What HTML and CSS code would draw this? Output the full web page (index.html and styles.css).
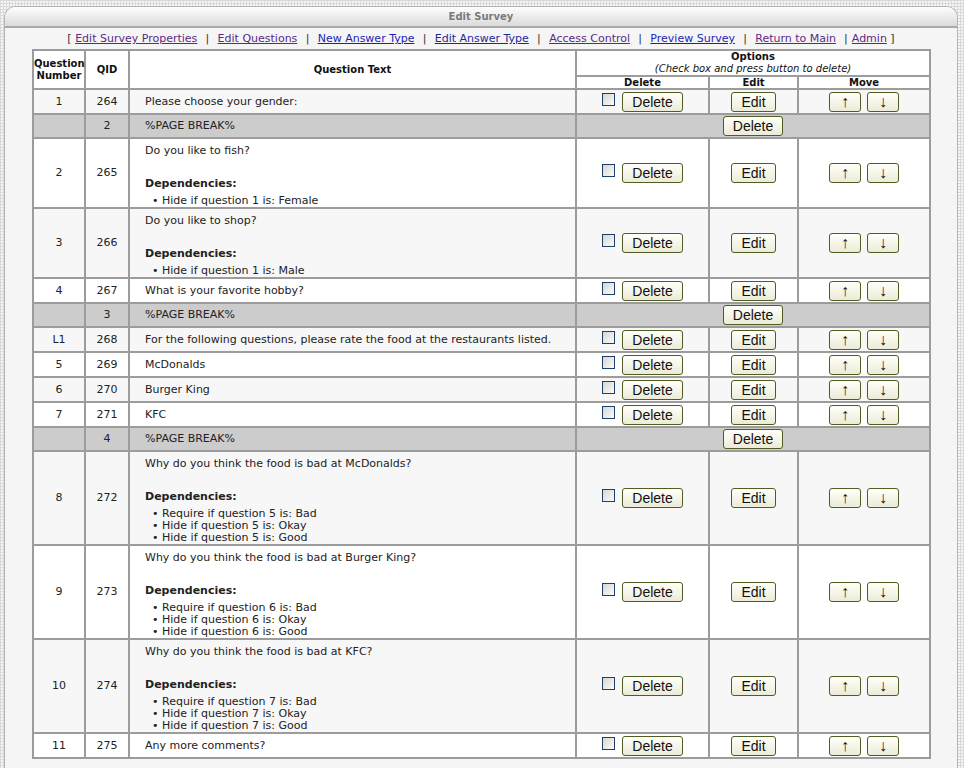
FILE: index.html
```html
<!DOCTYPE html>
<html>
<head>
<meta charset="utf-8">
<title>Edit Survey</title>
<link rel="stylesheet" href="styles.css">
</head>
<body>
<div class="panel">
  <div class="panel-head">Edit Survey</div>
  <div class="links">[ <a class="v" href="#">Edit Survey Properties</a><span class="sep">|</span><a class="v" href="#">Edit Questions</a><span class="sep">|</span><a class="u" href="#">New Answer Type</a><span class="sep">|</span><a class="u2" href="#">Edit Answer Type</a><span class="sep">|</span><a class="v" href="#">Access Control</a><span class="sep">|</span><a class="u" href="#">Preview Survey</a><span class="sep">|</span><a class="v" href="#">Return to Main</a><span class="sep2">|</span><a class="v" href="#">Admin</a> ]</div>
  <table class="grid">
    <colgroup>
      <col class="c-num"><col class="c-qid"><col class="c-text"><col class="c-del"><col class="c-edit"><col class="c-move">
    </colgroup>
    <thead>
      <tr class="h1">
        <th rowspan="2">Question<br>Number</th>
        <th rowspan="2">QID</th>
        <th rowspan="2">Question Text</th>
        <th colspan="3">Options<br><i class="hint">(Check box and press button to delete)</i></th>
      </tr>
      <tr class="h2">
        <th>Delete</th><th>Edit</th><th>Move</th>
      </tr>
    </thead>
    <tbody>
      <tr class="s alt">
        <td class="num">1</td><td class="num">264</td><td class="q">Please choose your gender:</td>
        <td class="opt"><input type="checkbox" class="cb"><button class="btn">Delete</button></td>
        <td class="opt"><button class="btn">Edit</button></td>
        <td class="opt"><button class="btn arr">&#8593;</button><button class="btn arr">&#8595;</button></td>
      </tr>
      <tr class="s pb">
        <td></td><td class="num">2</td><td class="q">%PAGE BREAK%</td>
        <td class="opt" colspan="3"><button class="btn">Delete</button></td>
      </tr>
      <tr>
        <td class="num">2</td><td class="num">265</td>
        <td class="q multi"><div>Do you like to fish?</div><div class="dep-h">Dependencies:</div><ul class="deps"><li>Hide if question 1 is: Female</li></ul></td>
        <td class="opt"><input type="checkbox" class="cb"><button class="btn">Delete</button></td>
        <td class="opt"><button class="btn">Edit</button></td>
        <td class="opt"><button class="btn arr">&#8593;</button><button class="btn arr">&#8595;</button></td>
      </tr>
      <tr class="alt">
        <td class="num">3</td><td class="num">266</td>
        <td class="q multi"><div>Do you like to shop?</div><div class="dep-h">Dependencies:</div><ul class="deps"><li>Hide if question 1 is: Male</li></ul></td>
        <td class="opt"><input type="checkbox" class="cb"><button class="btn">Delete</button></td>
        <td class="opt"><button class="btn">Edit</button></td>
        <td class="opt"><button class="btn arr">&#8593;</button><button class="btn arr">&#8595;</button></td>
      </tr>
      <tr class="s">
        <td class="num">4</td><td class="num">267</td><td class="q">What is your favorite hobby?</td>
        <td class="opt"><input type="checkbox" class="cb"><button class="btn">Delete</button></td>
        <td class="opt"><button class="btn">Edit</button></td>
        <td class="opt"><button class="btn arr">&#8593;</button><button class="btn arr">&#8595;</button></td>
      </tr>
      <tr class="s pb">
        <td></td><td class="num">3</td><td class="q">%PAGE BREAK%</td>
        <td class="opt" colspan="3"><button class="btn">Delete</button></td>
      </tr>
      <tr class="s alt">
        <td class="num">L1</td><td class="num">268</td><td class="q">For the following questions, please rate the food at the restaurants listed.</td>
        <td class="opt"><input type="checkbox" class="cb"><button class="btn">Delete</button></td>
        <td class="opt"><button class="btn">Edit</button></td>
        <td class="opt"><button class="btn arr">&#8593;</button><button class="btn arr">&#8595;</button></td>
      </tr>
      <tr class="s">
        <td class="num">5</td><td class="num">269</td><td class="q">McDonalds</td>
        <td class="opt"><input type="checkbox" class="cb"><button class="btn">Delete</button></td>
        <td class="opt"><button class="btn">Edit</button></td>
        <td class="opt"><button class="btn arr">&#8593;</button><button class="btn arr">&#8595;</button></td>
      </tr>
      <tr class="s alt">
        <td class="num">6</td><td class="num">270</td><td class="q">Burger King</td>
        <td class="opt"><input type="checkbox" class="cb"><button class="btn">Delete</button></td>
        <td class="opt"><button class="btn">Edit</button></td>
        <td class="opt"><button class="btn arr">&#8593;</button><button class="btn arr">&#8595;</button></td>
      </tr>
      <tr class="s">
        <td class="num">7</td><td class="num">271</td><td class="q">KFC</td>
        <td class="opt"><input type="checkbox" class="cb"><button class="btn">Delete</button></td>
        <td class="opt"><button class="btn">Edit</button></td>
        <td class="opt"><button class="btn arr">&#8593;</button><button class="btn arr">&#8595;</button></td>
      </tr>
      <tr class="s pb">
        <td></td><td class="num">4</td><td class="q">%PAGE BREAK%</td>
        <td class="opt" colspan="3"><button class="btn">Delete</button></td>
      </tr>
      <tr class="alt">
        <td class="num">8</td><td class="num">272</td>
        <td class="q multi"><div>Why do you think the food is bad at McDonalds?</div><div class="dep-h">Dependencies:</div><ul class="deps"><li>Require if question 5 is: Bad</li><li>Hide if question 5 is: Okay</li><li>Hide if question 5 is: Good</li></ul></td>
        <td class="opt"><input type="checkbox" class="cb"><button class="btn">Delete</button></td>
        <td class="opt"><button class="btn">Edit</button></td>
        <td class="opt"><button class="btn arr">&#8593;</button><button class="btn arr">&#8595;</button></td>
      </tr>
      <tr>
        <td class="num">9</td><td class="num">273</td>
        <td class="q multi"><div>Why do you think the food is bad at Burger King?</div><div class="dep-h">Dependencies:</div><ul class="deps"><li>Require if question 6 is: Bad</li><li>Hide if question 6 is: Okay</li><li>Hide if question 6 is: Good</li></ul></td>
        <td class="opt"><input type="checkbox" class="cb"><button class="btn">Delete</button></td>
        <td class="opt"><button class="btn">Edit</button></td>
        <td class="opt"><button class="btn arr">&#8593;</button><button class="btn arr">&#8595;</button></td>
      </tr>
      <tr class="alt">
        <td class="num">10</td><td class="num">274</td>
        <td class="q multi"><div>Why do you think the food is bad at KFC?</div><div class="dep-h">Dependencies:</div><ul class="deps"><li>Require if question 7 is: Bad</li><li>Hide if question 7 is: Okay</li><li>Hide if question 7 is: Good</li></ul></td>
        <td class="opt"><input type="checkbox" class="cb"><button class="btn">Delete</button></td>
        <td class="opt"><button class="btn">Edit</button></td>
        <td class="opt"><button class="btn arr">&#8593;</button><button class="btn arr">&#8595;</button></td>
      </tr>
      <tr class="s">
        <td class="num">11</td><td class="num">275</td><td class="q">Any more comments?</td>
        <td class="opt"><input type="checkbox" class="cb"><button class="btn">Delete</button></td>
        <td class="opt"><button class="btn">Edit</button></td>
        <td class="opt"><button class="btn arr">&#8593;</button><button class="btn arr">&#8595;</button></td>
      </tr>
    </tbody>
  </table>
</div>
</body>
</html>
```
FILE: styles.css
```css
html, body {
  margin: 0;
  padding: 0;
}
body {
  background-color: #f6f6f6;
  background-image:
    linear-gradient(90deg, #d9d9d9 1px, transparent 1px),
    linear-gradient(#d9d9d9 1px, transparent 1px);
  background-size: 3px 3px;
  font-family: "DejaVu Sans", Verdana, sans-serif;
  color: #222;
  padding: 6px 6px 0 4px;
}
.panel {
  border: 1px solid #b4b4b4;
  border-bottom: none;
  border-radius: 12px 12px 0 0;
  background: #f5f5f5;
  padding-bottom: 40px;
}
.panel-head {
  height: 19px;
  line-height: 19px;
  border-bottom: 2px solid #a9a9a9;
  border-radius: 11px 11px 0 0;
  background: linear-gradient(#fefefe, #dadada);
  text-align: center;
  font-size: 10px;
  font-weight: bold;
  color: #7a7a7a;
}
.links {
  text-align: center;
  font-size: 11px;
  line-height: 13px;
  padding: 4px 0;
  color: #333;
}
.links a {
  text-decoration: underline;
}
.links a.v { color: #5b2a86; }
.links a.u { color: #1d1db8; }
.links a.u2 { color: #1a2a9c; }
.sep {
  margin: 0 8.3px;
}
.sep2 {
  margin: 0 4px 0 8px;
}
.grid {
  width: 899px;
  margin: 0 0 0 27px;
  border-collapse: separate;
  border-spacing: 0;
  border: 1px solid #9c9c9c;
  table-layout: fixed;
  background: #fff;
}
.c-num { width: 52px; }
.c-qid { width: 44px; }
.c-text { width: 447px; }
.c-del { width: 133px; }
.c-edit { width: 89px; }
.c-move { width: 132px; }
.grid th, .grid td {
  border: 1px solid #9c9c9c;
}
.grid th {
  font-size: 10px;
  font-weight: bold;
  line-height: 12px;
  padding: 0;
  text-align: center;
  vertical-align: middle;
  background: #fff;
  color: #111;
}
.grid tr.h2 th {
  line-height: 11px;
}
.hint {
  font-weight: normal;
}
.grid td {
  font-size: 11px;
  line-height: 12px;
  padding: 0;
  vertical-align: middle;
  background: #fff;
}
.grid tr.alt td {
  background: #f7f7f7;
}
.grid tr.pb td {
  background: #cccccc;
}
.grid tr.s {
  height: 25px;
}
.grid tr.pb {
  height: 24px;
}
.num {
  text-align: center;
}
.q {
  padding: 0 15px !important;
}
.q.multi {
  padding: 6px 15px 0 !important;
}
.dep-h {
  margin-top: 21px;
  font-weight: bold;
}
.deps {
  margin: 5px 0 0;
  padding: 0 0 0 7px;
  list-style: none;
}
.deps li::before {
  content: "\2022\00a0";
}
.opt {
  text-align: center;
  white-space: nowrap;
}
.cb {
  -webkit-appearance: none;
  appearance: none;
  width: 13px;
  height: 13px;
  margin: 0 7px 1px 0;
  padding: 0;
  border: 1px solid #1f3f66;
  background: linear-gradient(135deg, #d6d6d2, #fbfbfb);
  vertical-align: baseline;
}
.btn {
  font-family: "Liberation Sans", Arial, sans-serif;
  font-size: 14px;
  height: 20px;
  line-height: 18px;
  padding: 0 9px;
  margin: 0;
  border: 1px solid #4f5c22;
  border-radius: 3px;
  background: linear-gradient(#fffffa, #ecebd8);
  color: #111;
  vertical-align: baseline;
}
.btn.arr {
  width: 32px;
  padding: 0;
  margin: 0 3px;
  font-size: 16px;
}
```
